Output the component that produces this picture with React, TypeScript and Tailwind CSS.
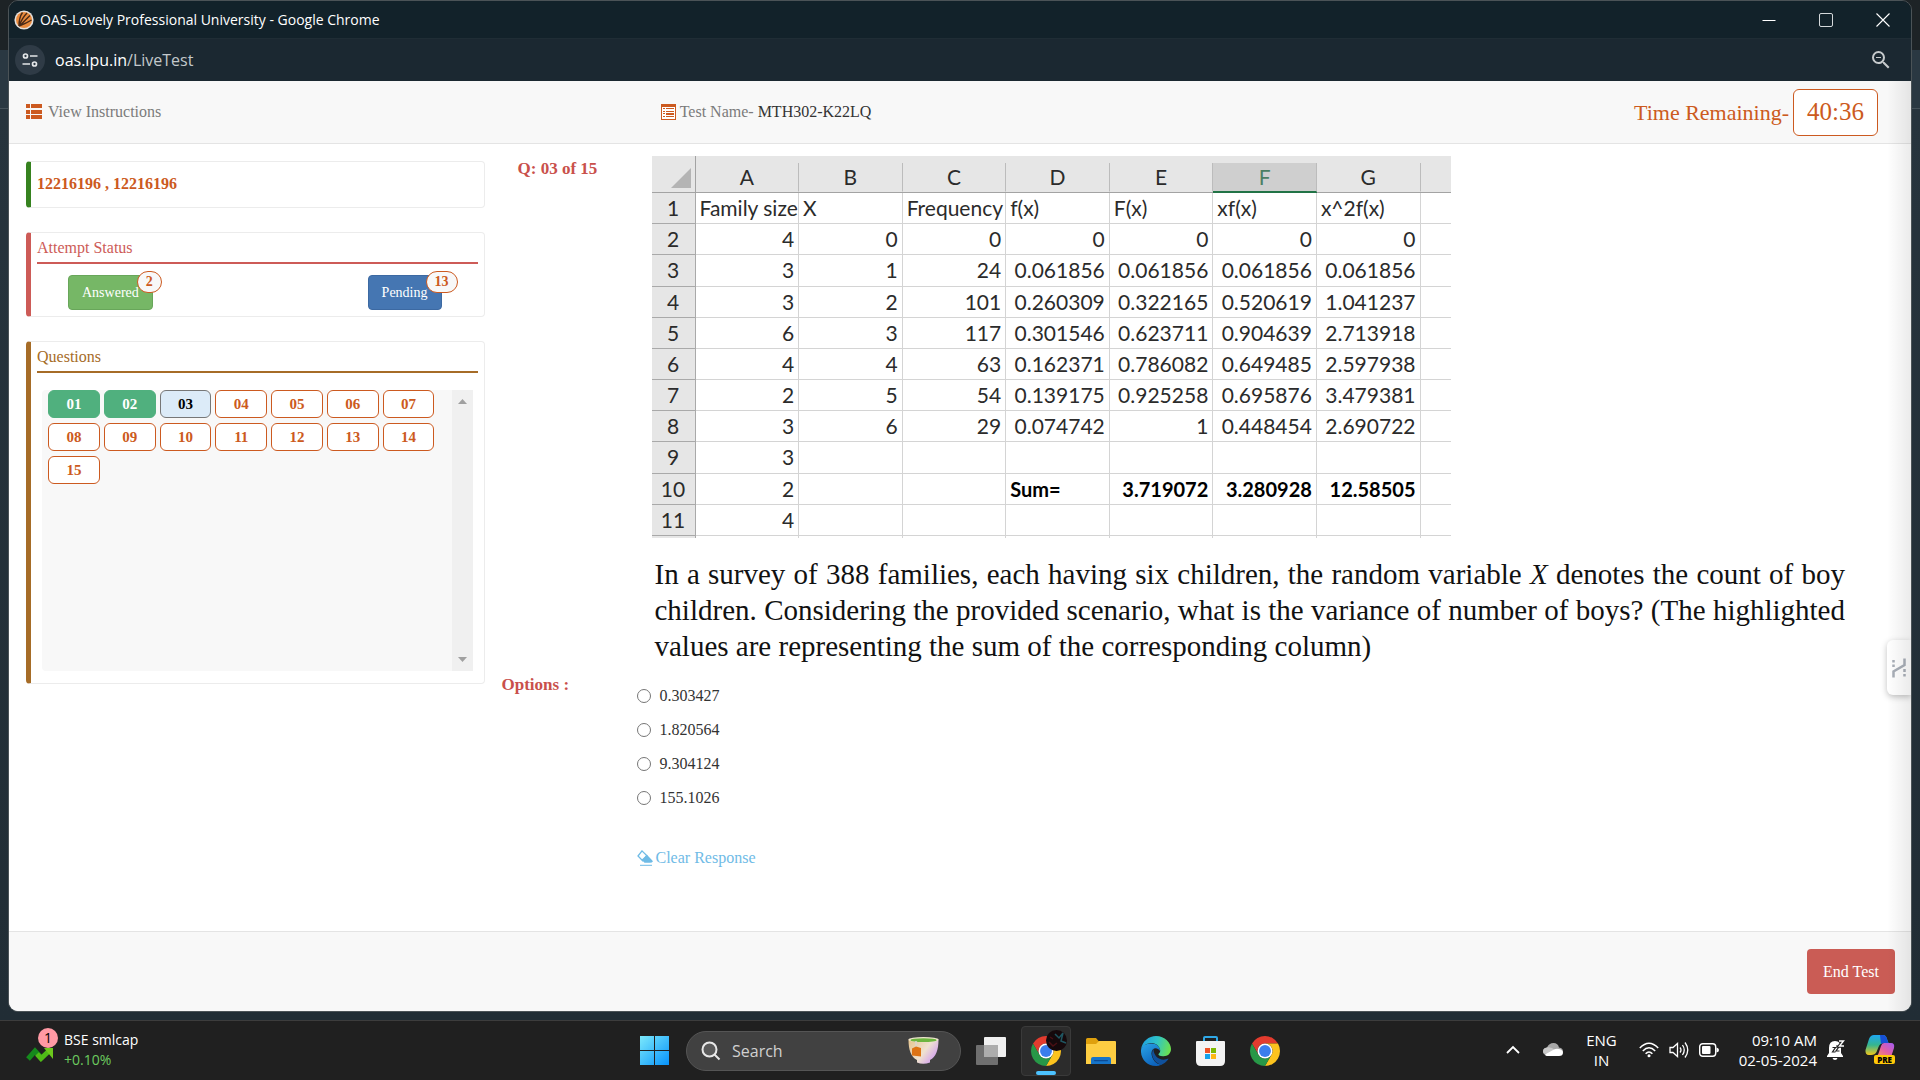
import React from "react";
import { MdZoomOut } from "react-icons/md";

const COLUMNS = ["A", "B", "C", "D", "E", "F", "G"];

const SHEET: string[][] = [
  ["Family size", "X", "Frequency", "f(x)", "F(x)", "xf(x)", "x^2f(x)"],
  ["4", "0", "0", "0", "0", "0", "0"],
  ["3", "1", "24", "0.061856", "0.061856", "0.061856", "0.061856"],
  ["3", "2", "101", "0.260309", "0.322165", "0.520619", "1.041237"],
  ["6", "3", "117", "0.301546", "0.623711", "0.904639", "2.713918"],
  ["4", "4", "63", "0.162371", "0.786082", "0.649485", "2.597938"],
  ["2", "5", "54", "0.139175", "0.925258", "0.695876", "3.479381"],
  ["3", "6", "29", "0.074742", "1", "0.448454", "2.690722"],
  ["3", "", "", "", "", "", ""],
  ["2", "", "", "Sum=", "3.719072", "3.280928", "12.58505"],
  ["4", "", "", "", "", "", ""],
];

const OPTIONS = ["0.303427", "1.820564", "9.304124", "155.1026"];

const QUESTIONS = Array.from({ length: 15 }, (_, i) => String(i + 1).padStart(2, "0"));

function UniversityLogo() {
  return (
    <svg className="size-5" viewBox="0 0 20 20" aria-hidden="true">
      <circle cx="10" cy="10" r="9.6" fill="#e4e0dc" />
      <circle cx="10" cy="10" r="8" fill="#e98a3c" />
      <g stroke="#4a2a17" strokeWidth="1.4" fill="none">
        <path d="M5 16C5 10 6 6 8.500 2.500M5 16C7 11 9 7 13 3M5 16C9 13 12 9 16 5.500M5 16C9 14.500 13 13 17.500 10" />
      </g>
    </svg>
  );
}

function SiteSettingsIcon() {
  return (
    <svg className="size-4" viewBox="0 0 16 16" fill="none" stroke="#e3e6e8" strokeWidth="1.700" aria-hidden="true">
      <circle cx="3.500" cy="4" r="2" />
      <path d="M8 4h7.500M.5 12H8" />
      <circle cx="12.500" cy="12" r="2" />
    </svg>
  );
}

function ListIcon() {
  return (
    <svg className="h-4 w-4" viewBox="0 0 16 16" fill="#cc5a20" aria-hidden="true">
      {[0, 6, 11].map((y) => (
        <g key={y}>
          <rect x="0" y={y} width="4" height="4" />
          <rect x="5" y={y} width="11" height="4" />
        </g>
      ))}
    </svg>
  );
}

function TestIcon() {
  return (
    <svg className="h-4 w-[15px]" viewBox="0 0 15 16" aria-hidden="true">
      <rect x="0.500" y="0.500" width="14" height="15" fill="#fff" stroke="#cc5a20" />
      <rect x="0" y="0" width="15" height="3" fill="#cc5a20" />
      <g fill="#cc5a20">
        {[4, 7, 9, 12].map((y) => (
          <React.Fragment key={y}>
            <rect x="2" y={y} width="2" height="1" />
            <rect x="5" y={y} width="8" height={y === 9 ? 2 : 1} />
          </React.Fragment>
        ))}
      </g>
    </svg>
  );
}

function EraserIcon() {
  return (
    <svg className="h-4 w-4" viewBox="0 0 16 16" aria-hidden="true">
      <path d="M5 .9 9.700 5.600 5.600 10.800 1 6z" fill="#fff" stroke="#6fbbe6" strokeWidth="1.300" />
      <path d="M10 4.800 16 11.200Q15 12.700 13 12.700H7.500L4.600 9.800z" fill="#6fbbe6" />
      <path d="M3 15.300H15" stroke="#6fbbe6" strokeWidth="1" />
    </svg>
  );
}

function ChromeLogo() {
  return (
    <svg className="size-[30px]" viewBox="2 2 44 44" aria-hidden="true">
      <path d="M14.470 29.500 4.950 13A22 22 0 0 1 43.050 13H24A11 11 0 0 0 14.470 29.500z" fill="#e33b2e" />
      <path d="M24 13H43.050A22 22 0 0 1 24 46L33.530 29.500A11 11 0 0 0 24 13z" fill="#fcc31e" />
      <path d="M33.530 29.500 24 46A22 22 0 0 1 4.950 13L14.470 29.500A11 11 0 0 0 33.530 29.500z" fill="#279847" />
      <circle cx="24" cy="24" r="11" fill="#fff" />
      <circle cx="24" cy="24" r="8.700" fill="#3b7ded" />
    </svg>
  );
}

function EdgeLogo() {
  return (
    <svg className="size-[30px]" viewBox="0 0 30 30" aria-hidden="true">
      <defs>
        <linearGradient id="edgeTop" x1="0" y1="0.300" x2="1" y2="0.500">
          <stop offset="0" stopColor="#1f9fe0" />
          <stop offset="0.500" stopColor="#2fc4c8" />
          <stop offset="1" stopColor="#6be04f" />
        </linearGradient>
        <linearGradient id="edgeLeft" x1="0" y1="0" x2="0.600" y2="1">
          <stop offset="0" stopColor="#2aa5e6" />
          <stop offset="1" stopColor="#0c62bd" />
        </linearGradient>
      </defs>
      <path d="M0 14C1 9 6 7 11 7.500 17 8 19.500 12 19 15 16 10 10 12 10.500 18 11 24 16 29 21 28.500 18 30 15 30 15 30 6 30-.5 23 0 14z" fill="url(#edgeLeft)" />
      <path d="M0 14C1 5 8 0 15 0 24 0 30 7 30 13 30 18 26 20.500 22 20.200 18.500 20 17 19 17.500 18 19 17 19.800 15 18.800 12.500 17 8 12 6.500 8 7.200 4 8 1 10.500 0 14z" fill="url(#edgeTop)" />
      <path d="M12.500 13C9 18 12 26 20 28.900 24 27.500 27 24 27.500 22.500 20 26 12.500 21 12.500 13z" fill="#10519c" />
    </svg>
  );
}

function FolderLogo() {
  return (
    <svg className="h-7 w-[30px]" viewBox="0 0 30 28" aria-hidden="true">
      <path d="M0 2.500Q0 1 1.500 1H10L13 4.500H29V10H0z" fill="#dfa00d" />
      <path d="M0 7H10L13 4H29Q30 4 30 5V27H0z" fill="#fdcd42" />
      <path d="M5 27V22Q5 20 7 20H23Q25 20 25 22V27z" fill="#1674c9" />
      <rect x="8" y="23" width="14" height="1.200" rx="0.600" fill="#0c4a94" />
    </svg>
  );
}

function StoreLogo() {
  return (
    <svg className="h-[30px] w-[29px]" viewBox="0 0 29 30" aria-hidden="true">
      <path d="M8 7V2Q8 1 9 1H20Q21 1 21 2V7" fill="none" stroke="#2fa8e6" strokeWidth="2" />
      <path d="M1 5H28Q29 5 29 6V25Q29 30 24 30H5Q0 30 0 25V6Q0 5 1 5z" fill="#f3f3f3" />
      <path d="M9 12h5v5H9z" fill="#ee5226" />
      <path d="M15 12h5v5h-5z" fill="#7db900" />
      <path d="M9 18h5v5H9z" fill="#12a2ec" />
      <path d="M15 18h5v5h-5z" fill="#fdb713" />
    </svg>
  );
}

function TaskViewLogo() {
  return (
    <svg className="h-7 w-[30px]" viewBox="0 0 30 28" aria-hidden="true">
      <rect x="8" y="0" width="22" height="20" rx="1" fill="#f0f0f0" />
      <rect x="0" y="8" width="22" height="20" rx="1" fill="#6f6f6f" />
      <path d="M8 8H22V20H8z" fill="#adadad" />
    </svg>
  );
}

function WindowsLogo() {
  return (
    <svg className="size-[29px]" viewBox="0 0 29 29" aria-hidden="true">
      <defs>
        <linearGradient id="win" x1="0" y1="0" x2="29" y2="29" gradientUnits="userSpaceOnUse">
          <stop offset="0" stopColor="#7ce9fb" />
          <stop offset="1" stopColor="#0793fb" />
        </linearGradient>
      </defs>
      <path d="M0 0h14v14H0zM15 0h14v14H15zM0 15h14v14H0zM15 15h14v14H15z" fill="url(#win)" />
    </svg>
  );
}

function TeaCup() {
  return (
    <svg className="h-[27px] w-[31px]" viewBox="0 0 31 27" aria-hidden="true">
      <defs>
        <linearGradient id="cup" x1="0" y1="0" x2="1" y2="0.600">
          <stop offset="0" stopColor="#e5c48f" />
          <stop offset="0.600" stopColor="#efe2cf" />
          <stop offset="1" stopColor="#d3a2ee" />
        </linearGradient>
      </defs>
      <path d="M.5 2.500C.5 13 3 20 9 23V25.500Q15 28 22 25.500V23C28 20 30.500 13 30.500 2.500z" fill="url(#cup)" />
      <ellipse cx="15.500" cy="2.700" rx="15" ry="2.600" fill="#f0e6cf" />
      <ellipse cx="15.500" cy="3.200" rx="13" ry="1.900" fill="#6db53f" />
      <path d="M8 4V10" stroke="#d9d6d0" strokeWidth="1.500" />
      <path d="M4 11.500 8 9.500 13 11V19.500L4 18.500z" fill="#de7414" />
    </svg>
  );
}

function CopilotLogo() {
  return (
    <svg className="h-[29px] w-[30px]" viewBox="0 0 30 29" aria-hidden="true">
      <defs>
        <linearGradient id="copA" x1="0" y1="0" x2="0" y2="1">
          <stop offset="0" stopColor="#1ea7f2" />
          <stop offset="0.500" stopColor="#35b58f" />
          <stop offset="1" stopColor="#f2c71b" />
        </linearGradient>
        <linearGradient id="copB" x1="1" y1="0" x2="0" y2="1">
          <stop offset="0" stopColor="#a25cf5" />
          <stop offset="0.500" stopColor="#e25fa5" />
          <stop offset="1" stopColor="#fb9a55" />
        </linearGradient>
      </defs>
      <path d="M9 0H18Q21 0 22 4L23.500 8H19Q15 8 13.500 12L11.500 17Q10 20 6 20H4Q0 20 .5 15L4 4Q5.500 0 9 0z" fill="url(#copA)" />
      <path d="M15 0H18Q21 0 22 4L23.500 8H19Q17 8 16 9z" fill="#1750d6" />
      <path d="M19 8H26Q30 8 29 13L26 22H10Q13 21 14 17L16 11Q17 8 19 8z" fill="url(#copB)" />
    </svg>
  );
}

function WindowBars() {
  return (
    <>
      <div className="flex h-[37px] shrink-0 items-center bg-[#12222a] pl-[5px] text-white">
        <UniversityLogo />
        <h1 className="ml-1.5 flex-1 text-[14px]">OAS-Lovely Professional University - Google Chrome</h1>
        <button aria-label="Minimize" className="flex h-full w-[57px] items-center justify-center">
          <svg className="size-3.5" viewBox="0 0 14 14" stroke="#fff" aria-hidden="true"><path d="M.5 7.500H13.500" /></svg>
        </button>
        <button aria-label="Maximize" className="flex h-full w-[57px] items-center justify-center">
          <svg className="size-3.5" viewBox="0 0 14 14" fill="none" stroke="#d5d9db" aria-hidden="true"><rect x="0.500" y="0.500" width="13" height="13" rx="1.500" /></svg>
        </button>
        <button aria-label="Close" className="flex h-full w-[57px] items-center justify-center">
          <svg className="size-3.5" viewBox="0 0 14 14" stroke="#fff" strokeWidth="1.100" aria-hidden="true"><path d="M.5.5 13.500 13.500M13.500.5.5 13.500" /></svg>
        </button>
      </div>
      <div className="flex h-[43px] shrink-0 items-center border-t border-[#1f2d35] bg-[#1b2831] pl-1.5 pr-[18px]">
        <button aria-label="View site information" className="flex size-[30px] items-center justify-center rounded-full bg-[#2f3b46]">
          <SiteSettingsIcon />
        </button>
        <p className="ml-2.5 flex-1 text-[16px] text-[#c3c8cb]">
          <span className="text-white">oas.lpu.in</span>/LiveTest
        </p>
        <button aria-label="Zoom" className="text-[#c6cacc]"><MdZoomOut size={24} /></button>
      </div>
    </>
  );
}

function PageHeader() {
  return (
    <header className="grid h-[63px] shrink-0 grid-cols-[34%_1fr_auto] items-center border-b border-[#e4e4e4] bg-[#f8f8f8] pl-[17px] pr-[33px] text-[16px] text-[#7b7b7b]">
      <a href="#instructions" className="flex items-center gap-1.5"><ListIcon />View Instructions</a>
      <p className="flex items-center gap-1 pl-[5px]">
        <TestIcon />
        <span>Test Name- <span className="text-[#333]">MTH302-K22LQ</span></span>
      </p>
      <p className="flex items-center gap-1 text-[22px] text-[#cc5a20]">
        Time Remaining-
        <span className="flex h-[47px] items-center rounded-md border border-[#cc5a20] bg-white px-[13px] text-[25px]">40:36</span>
      </p>
    </header>
  );
}

function StatusButton({ label, count, tone }: { label: string; count: number; tone: string }) {
  return (
    <button className={`relative h-[35px] rounded border px-[13px] text-[14px] text-white ${tone}`}>
      {label}
      <span className="absolute -top-[5px] left-full -ml-[15px] rounded-full border border-[#cc5a20] bg-[#f8f8f8] px-2 text-[14px] leading-5 font-bold text-[#cc5a20]">{count}</span>
    </button>
  );
}

function Sidebar() {
  return (
    <aside className="flex w-1/4 shrink-0 flex-col pl-[17px] pt-[17px] text-[16px]">
      <p className="flex h-[47px] items-center rounded border border-l-[5px] border-[#ececec] border-l-[#36821f] pb-0.5 pl-1.5 font-bold text-[#cc5a20]">12216196 , 12216196</p>

      <section className="mt-6 rounded border border-l-[5px] border-[#ececec] border-l-[#cd5b57] pl-1.5 pr-1.5 pb-1.5 pt-0.5">
        <h2 className="border-b-2 border-[#cd5b57] pb-0.5 leading-[25px] text-[#cd5b57]">Attempt Status</h2>
        <div className="flex justify-between pl-[31px] pr-9 pt-[11px]">
          <StatusButton label="Answered" count={2} tone="bg-[#76b766] border-[#68a65a]" />
          <StatusButton label="Pending" count={13} tone="bg-[#4576b2] border-[#3c69a2]" />
        </div>
      </section>

      <section className="mt-6 rounded border border-l-[5px] border-[#ececec] border-l-[#a66c27] pl-1.5 pr-1.5 pb-3 pt-0.5">
        <h2 className="border-b-2 border-[#a66c27] pb-0.5 leading-[25px] text-[#a66c27]">Questions</h2>
        <div className="mr-[5px] ml-[5px] mt-[17px] flex h-[281px] rounded bg-[#f8f8f8]">
          <div className="mr-[17px] ml-1.5 grid flex-1 auto-rows-max grid-cols-7 gap-x-1 gap-y-[5px] text-[15px] font-bold">
            {QUESTIONS.map((q, i) => (
              <button
                key={q}
                className={`h-7 rounded-md border ${
                  i < 2
                    ? "border-[#50b07e] bg-[#50b07e] text-white"
                    : i === 2
                      ? "border-[#777] bg-[#dcebf8] text-black"
                      : "border-[#cc5a20] bg-white text-[#cc5a20]"
                }`}
              >
                {q}
              </button>
            ))}
          </div>
          <div className="flex w-[21px] flex-col items-center justify-between bg-[#f0f0f0] py-[9px]">
            <svg className="h-[5px] w-[9px]" viewBox="0 0 9 5" fill="#a0a0a0" aria-hidden="true"><path d="M0 5 4.500 0 9 5z" /></svg>
            <svg className="h-[5px] w-[9px]" viewBox="0 0 9 5" fill="#a0a0a0" aria-hidden="true"><path d="M0 0H9L4.500 5z" /></svg>
          </div>
        </div>
      </section>
    </aside>
  );
}

function Spreadsheet() {
  return (
    <table className="h-[382px] w-[799px] table-fixed border-separate border-spacing-0 font-[Lato,sans-serif] text-[21px] leading-[30px] text-[#2b2b2b]">
      <colgroup>
        <col className="w-11" />
        {COLUMNS.map((c) => <col key={c} />)}
        <col className="w-[30px]" />
      </colgroup>
      <thead>
        <tr className="h-9 bg-[#e6e6e6]">
          <th className="border-r border-b border-[#a3a3a3] p-0 pr-1 align-bottom">
            <svg className="mb-1 ml-auto size-5" viewBox="0 0 20 20" fill="#b4b4b4" aria-hidden="true"><path d="M20 0V20H0z" /></svg>
          </th>
          {COLUMNS.map((c) => (
            <th key={c} scope="col" className={`border-b p-0 pt-[7px] leading-7 font-normal ${c === "F" ? "border-[#217346] text-[#4b7f64]" : "border-[#a3a3a3]"}`}>
              <div className={`border-r border-b border-r-[#bcbcbc] ${c === "F" ? "border-b-[#217346] bg-[#cfcfcf]" : "border-b-transparent"}`}>{c}</div>
            </th>
          ))}
          <th className="border-b border-[#a3a3a3] p-0" />
        </tr>
      </thead>
      <tbody>
        {SHEET.map((row, r) => (
          <tr key={r}>
            <th scope="row" className="border-r border-b border-[#a9a9a9] bg-[#e6e6e6] p-0 font-normal">{r + 1}</th>
            {row.map((cell, c) => (
              <td
                key={c}
                className={`overflow-hidden border-r border-b border-[#d4d4d4] px-1 py-0 whitespace-nowrap ${r === 0 || cell === "Sum=" ? "text-left" : "text-right"} ${r === 9 && c > 0 ? "text-[20px] font-bold text-black" : ""}`}
              >
                {cell}
              </td>
            ))}
            <td className="border-b border-[#d4d4d4] p-0" />
          </tr>
        ))}
        <tr className="h-0.5" aria-hidden="true">
          <td className="border-r border-[#a9a9a9] bg-[#e6e6e6] p-0" />
          {COLUMNS.map((c) => <td key={c} className="border-r border-[#d4d4d4] p-0" />)}
          <td className="p-0" />
        </tr>
      </tbody>
    </table>
  );
}

function Question() {
  return (
    <main className="grid flex-1 grid-cols-[152px_1fr] content-start pt-3 pr-[66px] text-[16px] text-[#333]">
      <h2 className="pl-[33px] text-[17px] font-bold leading-[26px] text-[#c9504b]">Q: 03 of 15</h2>
      <div className="min-w-0 pl-[15px]">
        <Spreadsheet />
        <p className="mt-[18px] pl-[3px] text-justify text-[29px] leading-9 text-[#111]">
          In a survey of 388 families, each having six children, the random variable <i>X</i> denotes the count of boy children. Considering the provided scenario, what is the variance of number of boys? (The highlighted values are representing the sum of the corresponding column)
        </p>
      </div>
      <h3 id="options" className="mt-2 pl-[17px] text-[17px] font-bold leading-[26px] text-[#c9504b]">Options :</h3>
      <div className="mt-5">
        <div role="radiogroup" aria-labelledby="options" className="flex flex-col gap-2.5">
          {OPTIONS.map((o) => (
            <label key={o} className="flex h-6 items-center gap-[9px]">
              <input type="radio" name="answer" className="size-3.5" />
              {o}
            </label>
          ))}
        </div>
        <button className="mt-9 flex items-center gap-[3px] text-[#6fbbe6]"><EraserIcon />Clear Response</button>
      </div>
    </main>
  );
}

function Taskbar() {
  return (
    <nav aria-label="Taskbar" className="grid h-[60px] shrink-0 grid-cols-[1fr_auto_1fr] items-center border-t border-[#3d3d3d] bg-[#202020] text-[14px] leading-5 text-white">
      <button className="flex items-center gap-1.5 pb-0.5 pl-[26px] text-left">
        <span className="relative block h-9 w-8">
          <svg className="mt-3.5 h-4 w-7" viewBox="0 0 28 16" fill="none" strokeWidth="5" aria-hidden="true">
            <path d="M2 13 9 5 14.500 11" stroke="#158a1c" />
            <path d="M11 8 15 12.500 25 3" stroke="#4fbb17" />
            <path d="M18 2H27V13z" fill="#6cc91c" />
          </svg>
          <span className="absolute -top-1 right-0 flex size-5 items-center justify-center rounded-full bg-[#ff99a4] text-[14px] text-black">1</span>
        </span>
        <span>BSE smlcap<br /><span className="text-[#6ccb5f]">+0.10%</span></span>
      </button>

      <div className="flex items-center">
        <button aria-label="Start"><WindowsLogo /></button>
        <label className="mr-[15px] ml-[17px] flex h-10 w-[275px] items-center rounded-full border border-[#555] bg-[#414141] pr-[21px] pl-3.5">
          <svg className="size-5" viewBox="0 0 20 20" fill="none" stroke="#e8e8e8" strokeWidth="2" aria-hidden="true"><circle cx="8.500" cy="8.500" r="7" fill="#5a5a5a" /><path d="M13.500 13.500 18.500 18.500" /></svg>
          <input type="search" aria-label="Search" placeholder="Search" className="ml-[11px] w-0 flex-1 bg-transparent text-[16px] placeholder-[#d0d0d0] outline-none" />
          <TeaCup />
        </label>
        <button aria-label="Task View"><TaskViewLogo /></button>
        <button aria-label="Google Chrome window" className="relative mr-[15px] ml-[15px] flex h-[50px] w-[50px] items-center rounded border border-[#3a3a3a] bg-[#2c2c2c] pl-[9px]">
          <ChromeLogo />
          <svg className="absolute top-[3px] right-[3px] size-[21px]" viewBox="0 0 21 21" aria-hidden="true">
            <circle cx="10.500" cy="10.500" r="10.500" fill="#15090c" />
            <path d="M9 4 13 8 17 3 15 11 20 13" stroke="#1f5560" strokeWidth="1.500" fill="none" />
            <path d="M3 12 7 16 11 13M4 7 7 9" stroke="#4a1015" strokeWidth="1.500" fill="none" />
          </svg>
          <span className="absolute bottom-0 left-3.5 h-1 w-5 rounded-full bg-[#4cc2ff]" />
        </button>
        <div className="flex items-center gap-[25px]">
          <button aria-label="File Explorer"><FolderLogo /></button>
          <button aria-label="Microsoft Edge"><EdgeLogo /></button>
          <button aria-label="Microsoft Store"><StoreLogo /></button>
          <button aria-label="Google Chrome"><ChromeLogo /></button>
        </div>
      </div>

      <div className="flex items-center justify-end pr-[25px] pb-0.5 text-center">
        <button aria-label="Show hidden icons">
          <svg className="h-2.5 w-3.5" viewBox="0 0 14 10" fill="none" stroke="#fff" strokeWidth="1.800" aria-hidden="true"><path d="M1 8 7 2 13 8" /></svg>
        </button>
        <button aria-label="OneDrive" className="ml-[23px]">
          <svg className="h-[13px] w-5" viewBox="0 0 20 13" aria-hidden="true">
            <path d="M4 12Q0 12 0 8.500 0 5 4 4.500 6 0 10.500 0 15 0 16 4.500 20 5 20 8.500L12 12z" fill="#a8a8a8" />
            <path d="M4 4.500Q8 3.500 12 7L5 11Q0 11 0 8.500 0 5 4 4.500z" fill="#c9c9c9" />
            <path d="M2 11.500 11 6.500Q13 5.500 16 6 20 7 20 9.500 20 13 16 13H4Q2.500 13 2 11.500z" fill="#fff" />
          </svg>
        </button>
        <button className="mr-[22px] ml-[23px] text-[15px]">ENG<br />IN</button>
        <button aria-label="Network, volume and battery" className="flex items-center gap-2.5">
          <svg className="h-4 w-5" viewBox="0 0 20 16" fill="none" stroke="#fff" strokeWidth="1.500" aria-hidden="true">
            <path d="M.8 6Q10-3.500 19.200 6M3.800 9Q10 2.500 16.200 9M6.600 11.800Q10 8 13.400 11.800" />
            <circle cx="10" cy="13.800" r="1.500" fill="#fff" stroke="none" />
          </svg>
          <svg className="h-[18px] w-5" viewBox="0 0 20 18" fill="none" stroke="#fff" strokeWidth="1.300" aria-hidden="true">
            <path d="M1 6.500H4L8.500 2.500V15.500L4 11.500H1zM11 6.500Q13 9 11 11.500M13.500 4Q17 9 13.500 14M16 1.500Q21.500 9 16 16.500" />
          </svg>
          <svg className="h-3.5 w-5" viewBox="0 0 20 14" aria-hidden="true">
            <rect x="0.700" y="0.700" width="16" height="12.600" rx="3" fill="none" stroke="#fff" strokeWidth="1.400" />
            <rect x="3" y="3" width="8.500" height="8" rx="1" fill="#fff" />
            <path d="M17.500 4.500Q20 5 20 7T17.500 9.500z" fill="#fff" />
          </svg>
        </button>
        <button className="ml-5 text-right text-[15px]">09:10 AM<br />02-05-2024</button>
        <button aria-label="Do not disturb" className="ml-2.5">
          <svg className="h-5 w-[18px]" viewBox="0 0 18 20" aria-hidden="true">
            <path d="M2 13V8Q2 1 8 1 14 1 14 8V13L16 16V17H0V16zM5.500 18H10.500Q10 20 8 20T5.500 18z" fill="#fff" />
            <path d="M5.500 7.500H8.500L5.500 12H8.500M9 6H12.500L9 11H12.500" stroke="#202020" fill="none" strokeWidth="1.200" />
            <path d="M12 .5H17L12.500 6H17" stroke="#202020" strokeWidth="3.500" fill="none" />
            <path d="M12 1H16.500L12.500 6H17" stroke="#fff" strokeWidth="1.400" fill="none" />
          </svg>
        </button>
        <button aria-label="Copilot preview" className="relative ml-5">
          <CopilotLogo />
          <span className="absolute right-0 bottom-0 rounded-xs bg-[#ffc808] px-[3px] text-[8px] leading-[9px] font-extrabold text-black">PRE</span>
        </button>
      </div>
    </nav>
  );
}

export default function App() {
  return (
    <div className="flex h-screen min-h-[700px] flex-col font-['Open_Sans',sans-serif]">
      <div className="flex min-h-0 flex-1 flex-col bg-[linear-gradient(#1d2326_50px,#2a3842_50px,#2a3842_108px,#46525a_108px,#46525a_109px,#27343d_109px,#212d35)] px-2 pb-2">
        <div className="relative flex min-h-0 flex-1 flex-col overflow-hidden rounded-[10px] border border-[#4b5357]">
          <WindowBars />
          <div className="flex min-h-0 flex-1 flex-col bg-white font-['Liberation_Serif',serif]">
            <PageHeader />
            <div className="flex min-h-0 flex-1">
              <Sidebar />
              <Question />
            </div>
            <footer className="flex h-[80px] shrink-0 items-center justify-end border-t border-[#e4e4e4] bg-[#f8f8f8] pr-4">
              <button className="h-[45px] rounded bg-[#ca5c55] px-4 text-[16px] text-white">End Test</button>
            </footer>
          </div>
          <button aria-label="Open side panel" className="absolute top-[639px] right-0 flex h-[55px] w-6 items-center justify-center rounded-l-md bg-white shadow-[0_2px_6px_rgba(0,0,0,0.25)]">
            <svg className="h-5 w-3.5" viewBox="0 0 14 20" fill="none" stroke="#a9afb8" strokeWidth="2.500" aria-hidden="true">
              <path d="M1.500 19.500V13.500L12.500 7V.5" />
              <path d="M1.500 2V4.500M1.500 6.500V9M12.500 11V14M12.500 16V18.500" />
            </svg>
          </button>
          <div aria-hidden="true" className="pointer-events-none absolute top-[80px] right-0 bottom-0 w-6 bg-linear-to-r from-transparent to-black/8" />
        </div>
      </div>
      <Taskbar />
    </div>
  );
}
